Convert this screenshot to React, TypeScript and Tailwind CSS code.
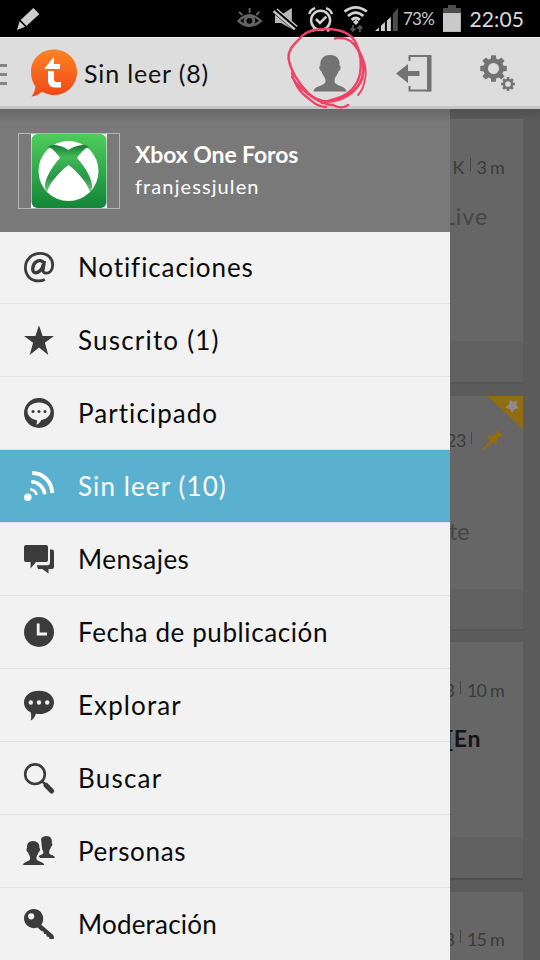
import type { ReactNode } from "react";

const GEAR_TEETH = [0, 45, 90, 135, 180, 225, 270, 315];

const MENU = [
  { label: "Notificaciones", icon: "at", tracking: "tracking-[0.9px]" },
  { label: "Suscrito (1)", icon: "star", tracking: "tracking-[1.2px]" },
  { label: "Participado", icon: "participated", tracking: "tracking-[1.05px]" },
  { label: "Sin leer (10)", icon: "feed", tracking: "tracking-[1.1px]" },
  { label: "Mensajes", icon: "messages", tracking: "tracking-[0.5px]" },
  { label: "Fecha de publicación", icon: "clock", tracking: "tracking-[0.6px]" },
  { label: "Explorar", icon: "explore", tracking: "tracking-[1.1px]" },
  { label: "Buscar", icon: "search", tracking: "tracking-[1.2px]" },
  { label: "Personas", icon: "people", tracking: "tracking-[0.7px]" },
  { label: "Moderación", icon: "key", tracking: "tracking-[0.2px]" },
];

const ICONS: Record<string, ReactNode> = {
  at: (
    <g fill="none" stroke="currentColor" transform="translate(-.6 -.6)">
      <path d="M21.5 28C19.5 29 17.5 29.5 15.2 29.5C7 29.5 2 24 2 16.2C2 8 8.4 2 16.8 2C24.5 2 29.3 7 29.3 13.6C29.3 18.8 26.2 21.8 22.8 21.8C20.2 21.8 19.4 20.3 19.9 17.8L21.3 9.5" strokeWidth="2.8" />
      <path d="M20.3 11.5C18.8 8.8 15.6 8.6 13 10.3C9 12.8 7.8 20.8 11.8 21.3C15.4 21.7 19.3 18 20.1 12.7" strokeWidth="3.4" />
    </g>
  ),
  star: <path d="M15 .3L18.6 11H30L20.9 17.8L24.3 30L15 22.6L5.7 30L9.1 17.8L0 11H11.4Z" />,
  participated: (
    <>
      <circle cx="15" cy="15" r="15" />
      <path d="M15 4.4C21.6 4.4 26.5 8.3 26.5 13.2C26.5 17.7 22.5 21.2 17.3 21.9C16.4 24 14.8 25.8 12.3 26.8C13 25 13.1 23.6 12.8 22C7.3 21.3 3.5 17.7 3.5 13.2C3.5 8.3 8.4 4.4 15 4.4Z" fill="#f2f2f2" />
      <circle cx="9" cy="13.5" r="1.5" />
      <circle cx="15" cy="13.5" r="1.5" />
      <circle cx="21" cy="13.5" r="1.5" />
    </>
  ),
  feed: (
    <>
      <circle cx="3.8" cy="26.3" r="3.8" />
      <g fill="none" stroke="currentColor">
        <path d="M6 18.2C9.6 18.5 12 20.8 12.6 24" strokeWidth="2.6" />
        <path d="M7.3 10.8C14.2 11 20 16 20.8 23.2" strokeWidth="3.6" />
        <path d="M8.2 2C19.2 2 27.8 11 28.3 22.2" strokeWidth="4" />
      </g>
    </>
  ),
  messages: (
    <>
      <path d="M2 1H22Q24 1 24 3V16Q24 18 22 18H12L6.6 24.5V18H2Q0 18 0 16V3Q0 1 2 1Z" />
      <path d="M26 5.6H28Q30 5.6 30 7.8V23Q30 25 28 25H24.5V29.5L18.2 25H14L12.8 21.2H24Q26 21 26 18.5Z" />
    </>
  ),
  clock: (
    <>
      <circle cx="15" cy="15" r="15" />
      <path d="M14.2 6.5V17H23" fill="none" stroke="#f2f2f2" strokeWidth="2.8" />
    </>
  ),
  explore: (
    <>
      <path d="M15 .8C23.4 .8 30 5.5 30 12.4C30 19.4 23.2 24 15 24C13.8 24 12.8 23.9 11.8 23.7C11.2 26.4 9.8 28.8 6.7 30.5C7.5 27.2 7.3 24.5 6.6 22.2C2.4 20.1 0 16.6 0 12.4C0 5.5 6.6 .8 15 .8Z" />
      <g fill="#f2f2f2">
        <circle cx="6.8" cy="12.5" r="2.2" />
        <circle cx="15" cy="12.5" r="2.2" />
        <circle cx="23.2" cy="12.5" r="2.2" />
      </g>
    </>
  ),
  search: (
    <>
      <circle cx="11" cy="11.2" r="9.8" fill="none" stroke="currentColor" strokeWidth="2.6" />
      <path d="M17.8 18L22 22.2" stroke="currentColor" strokeWidth="2.4" />
      <path d="M22 22.2L27.7 28" stroke="currentColor" strokeWidth="5" strokeLinecap="round" />
    </>
  ),
  people: (
    <>
      <path d="M17 3C18 .8 20.2 0 22.5 0C26.6 0 28.5 3 27.8 7.2C28.9 7.4 28.3 10.3 27.1 10.6C26.8 12.8 25 13.6 25.1 16.4C25.3 19.4 30.8 18.5 31 22H16.2L14.5 20.2C16.2 19 19.3 18.6 19.4 16.8C19.4 15 18.2 13.8 18 12.2Z" />
      <path d="M9 5C13.3 5 16 8 15.3 12C16.8 12.4 16 15.8 14.5 16.2C14.2 18.4 12.2 20.1 12.4 22.5C12.6 26 19.7 25.3 20.4 29H-1C-.6 25.3 6 26 6.2 22.5C6.3 20.1 4.5 18.4 4 16.2C2.4 15.8 1.8 12.4 3.2 12C2.3 8 4.7 5 9 5Z" />
    </>
  ),
  key: (
    <path
      fillRule="evenodd"
      d="M9.5 0C15.5 0 19.7 4.7 19.2 10.5C19.1 12.6 18.3 14.2 17.3 15.7L29 25.8Q30 27 30 30H25.5L25.1 27.9L22.8 27.4L22.3 25.2L20 24.7L19.4 22.6L17.4 22L13.5 18.5C6.8 21 0 15.8 0 9.5C0 4.3 4.3 0 9.5 0ZM7.2 4.2A3.1 3.1 0 1 0 7.2 10.4A3.1 3.1 0 1 0 7.2 4.2Z"
    />
  ),
};

function StatusBar() {
  return (
    <div className="flex h-[37px] shrink-0 items-center bg-black pr-[16px] pl-[16px] text-[#c9c9c9]">
      <svg width="24" height="24" viewBox="0 0 24 24" fill="#cfcfcf">
        <path d="M17.5 1L23.5 7L10.5 19L4.7 13ZM3.6 14.2L9.2 19.8L1 23Z" />
      </svg>
      <svg className="ml-[197px]" width="26" height="22" viewBox="0 0 26 22" fill="none" stroke="#646464">
        <path d="M1.5 13Q12.5 1.5 24 13Q12.5 22.5 1.5 13Z" strokeWidth="2.4" />
        <circle cx="12.5" cy="12.8" r="4.4" strokeWidth="3" />
        <path d="M2 4L5.5 7M12.7 0V5M22.5 3.5L19.5 7" strokeWidth="2" />
      </svg>
      <svg className="ml-[10px]" width="26" height="24" viewBox="0 0 26 24" fill="#b8b8b8">
        <path d="M2 8H8L19 1V22L8 16H2Z" />
        <path d="M1 3L25 23" stroke="#000" strokeWidth="6" />
        <path d="M.5 4L22 22.5" stroke="#c9c9c9" strokeWidth="2.4" />
        <path d="M4 2L24.5 19.5" stroke="#c9c9c9" strokeWidth="1.4" />
      </svg>
      <svg className="ml-[10px]" width="26" height="26" viewBox="0 0 26 26" fill="none" stroke="#d2d2d2" strokeWidth="2.5">
        <circle cx="12.7" cy="14.3" r="9.6" />
        <path d="M8 13L12 17L18.5 10.5M1.3 8Q2.5 3.2 7.2 2M24.2 8Q22.7 3.2 18.2 2M4.5 25.5L7 22M21 25.5L18.5 22" />
      </svg>
      <svg className="ml-[9px]" width="26" height="28" viewBox="0 0 26 28" fill="none" stroke="#d2d2d2" strokeWidth="2.7">
        <path d="M1.5 6.5Q12.8-2 24 6.5M5 11Q12.8 4 20.5 11M8.7 15Q12.8 11 17 15" />
        <path d="M13 14.5L16 17L13 20L10 17Z" fill="#d2d2d2" stroke="none" />
        <path d="M10 20V26M7.5 23.5L10 26L12.5 23.5M17 27V21M14.5 23.5L17 21L19.5 23.5" stroke="#555" strokeWidth="1.8" />
      </svg>
      <svg className="ml-[5px]" width="25" height="25" viewBox="0 0 25 25" fill="#cfcfcf">
        <path d="M1 25L5 21.5V25ZM7 19.7L11 16V25H7ZM13 14.5L17 11V25H13Z" />
        <path d="M19 8L24 2V25H19Z" fill="#4d4d4d" />
      </svg>
      <span className="ml-[4px] w-[33px] text-[17px] leading-none tracking-[-0.7px] whitespace-nowrap">73%</span>
      <svg className="ml-[7px]" width="18" height="27" viewBox="0 0 18 27">
        <path d="M5 0H13V3H18V9H0V3H5Z" fill="#4d4d4d" />
        <path d="M0 8H18V27H0Z" fill="#c9c9c9" />
      </svg>
      <span className="ml-[9px] text-[21px] leading-none tracking-[0.1px] text-[#d9d9d9]">22:05</span>
    </div>
  );
}

function Gear({ size }: { size: number }) {
  return (
    <svg width={size} height={size} viewBox="-13 -13 26 26" fill="#737373">
      <circle r="7.6" fill="none" stroke="#737373" strokeWidth="4.6" />
      {GEAR_TEETH.map((angle) => (
        <path key={angle} d="M-2.8-8L-2.3-12.8H2.3L2.8-8Z" transform={`rotate(${angle})`} />
      ))}
    </svg>
  );
}

function ActionBar() {
  return (
    <div className="relative flex h-[72px] shrink-0 items-center border-t border-b-[3px] border-t-[#eeeeee] border-b-[#c6c6c6] bg-[#dddddd]">
      <div className="flex w-[7px] flex-col gap-[6px] pt-[4px]">
        <div className="h-[3px] bg-[#858585]" />
        <div className="h-[3px] bg-[#858585]" />
        <div className="h-[3px] bg-[#858585]" />
      </div>
      <svg className="mt-[2px] ml-[23px]" width="48" height="50" viewBox="0 0 48 50">
        <defs>
          <linearGradient id="logo" x1="0" y1="0" x2="0" y2="1">
            <stop offset="0" stopColor="#fb8424" />
            <stop offset="1" stopColor="#f04716" />
          </linearGradient>
        </defs>
        <path d="M24 1.5C37 1.5 47 11 47 24C47 37 37 47 24 47C20.5 47 17 46.2 12 43.7C9 46.2 6 48 1.5 48.5C4 45.5 5 42 5.5 38.5C2.6 34.6 1 29.6 1 24C1 11 11 1.5 24 1.5Z" fill="url(#logo)" />
        <path d="M14.5 20.5L24 8.5V16H30V21H14.5ZM18 23H24V31C24 33.5 25.3 34 27 34H31V39.5H25.5C20.5 39.5 18 37 18 32Z" fill="#fff" />
      </svg>
      <h1 className="ml-[6px] w-[130px] pt-[2px] text-[25px] leading-none tracking-[0.85px] whitespace-nowrap text-[#111111]">Sin leer (8)</h1>
      <svg className="mt-[2px] ml-[99px]" width="34" height="37" viewBox="0 0 34 37" fill="#737373">
        <path d="M17 0C24 0 27.5 5 26.4 10.5C28.6 11 27.6 15.8 25.5 16.3C24.7 20 21.5 22 21.5 26C21.5 31.5 32.5 30 33.5 36.5H.5C1.5 30 12.5 31.5 12.5 26C12.5 22 9.3 20 8.5 16.3C6.4 15.8 5.4 11 7.6 10.5C6.5 5 10 0 17 0Z" />
      </svg>
      <svg className="mt-[2px] ml-[48px]" width="38" height="37" viewBox="0 0 38 37">
        <path d="M14.5 6V1H34V35.5H14.5V31" fill="none" stroke="#737373" strokeWidth="2" />
        <path d="M32 0H36.5V36.5H32ZM1 18.5L13 9V16H24.5V21H13V28Z" fill="#737373" />
      </svg>
      <div className="flex items-end pt-[2px] pl-[47px]">
        <div className="mb-[9px]">
          <Gear size={27} />
        </div>
        <div className="-ml-[6px]">
          <Gear size={14} />
        </div>
      </div>
      {/* hand-drawn ring around the profile button */}
      <svg className="pointer-events-none absolute -top-[13px] left-[284px]" width="86" height="86" viewBox="284 25 86 86" fill="none" stroke="#ee4365" strokeWidth="2.4" strokeLinecap="round" strokeLinejoin="round">
        <path d="M335 38.5C346 36 353 41 358 50C363 59 365 69 362 79C357 91 346 99 333 101C325 102.5 317 101 309 94C299 84 290 70 288.5 58C288 48 296 43 302 36C307 31 315 29 326 29C340 29 351 33 356 43C360 52 362 63 360 74C357 86 350 94 338 98C329 101 324 102 322 103" />
        <path d="M292 73C294 82 297 88 303 94C310 99 316 107 326 107M292 77C298 87 306 93 314 98C320 102 326 105 333 105C338 108 344 108 348 105" />
        <path d="M355 43C361 53 368 66 365 79C364 86 362 91 358 95M362 59C366 68 362 79 358 86" strokeWidth="1.8" />
      </svg>
    </div>
  );
}

function ForumHeader() {
  return (
    <div className="flex h-[123px] shrink-0 items-center bg-[linear-gradient(to_bottom,#686868_0,#797979_14px)] pl-[18px] text-white">
      <div className="flex h-[76px] w-[102px] justify-center border border-[#b5b5b5]">
        <svg width="76" height="74" viewBox="0 0 76 74">
          <defs>
            <linearGradient id="tile" x1="0" y1="0" x2="0" y2="1">
              <stop offset="0" stopColor="#50cc5c" />
              <stop offset="1" stopColor="#118638" />
            </linearGradient>
            <linearGradient id="cross" x1="0" y1="0" x2="0" y2="1">
              <stop offset="0" stopColor="#197b33" />
              <stop offset=".25" stopColor="#42b957" />
              <stop offset=".7" stopColor="#279646" />
              <stop offset="1" stopColor="#7bc486" />
            </linearGradient>
          </defs>
          <rect width="76" height="74" fill="#fff" />
          <rect x=".5" width="75" height="74" rx="6" fill="url(#tile)" />
          <circle cx="37.5" cy="37" r="30" fill="#fff" />
          <path d="M17 13C23 9 31 12 37.5 16C44 12 52 9 58 13C54 14 50 18 46 24C55 34 62 46 61 54L59 58C56 49 48 39 37.5 31C27 39 19 49 16 58L14 54C13 46 20 34 29 24C25 18 21 14 17 13Z" fill="url(#cross)" />
        </svg>
      </div>
      <div className="pb-[4px] pl-[15px] whitespace-nowrap">
        <p className="text-[23px] leading-[34px] font-bold tracking-[-0.1px]">Xbox One Foros</p>
        <p className="text-[20px] leading-[30px] tracking-[1.1px]">franjessjulen</p>
      </div>
    </div>
  );
}

function Drawer() {
  return (
    <div className="flex w-[450px] shrink-0 flex-col bg-[#f2f2f2]">
      <ForumHeader />
      <nav className="-mt-px flex flex-col">
        {MENU.map((item, i) => (
          <div
            key={item.icon}
            className={`flex h-[73px] shrink-0 items-center border-b border-[#e2e2e2] pl-[24px] ${
              item.icon === "feed" ? "bg-[#59b0cf] text-white" : i === 0 ? "text-[#3b3b3b]" : "bg-[#f2f2f2] text-[#3b3b3b]"
            }`}
          >
            <svg className="overflow-visible" width="30" height="30" viewBox="0 0 30 30" fill="currentColor">
              {ICONS[item.icon]}
            </svg>
            <span className={`pl-[24px] text-[26px] leading-none whitespace-nowrap ${item.tracking} ${item.icon === "feed" ? "text-white" : "text-[#0a0a0a]"}`}>
              {item.label}
            </span>
          </div>
        ))}
      </nav>
    </div>
  );
}

function Meta({ views, time }: { views: string; time: string }) {
  return (
    <div className="flex items-center justify-end gap-[5px] pr-[19px] text-[18px] leading-none whitespace-nowrap text-[#3b3b3b]">
      <span>{views}</span>
      <span className="-mt-[5px] h-[13px] w-px shrink-0 bg-[#464646]" />
      <span className="pl-[1px] tracking-[-0.8px]">{time}</span>
    </div>
  );
}

function TopicList() {
  return (
    <div className="flex w-[90px] flex-col overflow-hidden bg-[linear-gradient(to_bottom,#505050_0,#5b5b5b_12px)] pt-[10px] pr-[17px]">
      <div className="mb-[12px] flex h-[265px] shrink-0 flex-col border-b-2 border-[#565656] bg-[#666666] pt-[39px]">
        <Meta views="K" time="3 m" />
        <p className="-ml-[7px] pt-[29px] text-[23px] leading-none tracking-[1px] text-[#454545]">Live</p>
        <div className="mt-auto h-[41px] bg-[#616161]" />
      </div>
      <div className="relative mb-[11px] flex h-[235px] shrink-0 flex-col border-b-2 border-[#565656] bg-[#666666] pt-[35px]">
        <svg className="absolute top-0 right-0" width="36" height="33" viewBox="0 0 36 33">
          <path d="M0 0H36V33Z" fill="#916c10" />
          <path d="M23 3.5L26.2 6L30.5 4.5L29.3 8.8L32 12.5L27.8 13L25 17L22.8 13L18 11.5L21.8 8.5Z" fill="#8c8c8c" />
        </svg>
        <div className="flex items-center text-[18px] leading-none text-[#3b3b3b]">
          <span className="-ml-[4px] tracking-[-0.5px]">23</span>
          <span className="-mt-[4px] ml-[5px] h-[12px] w-px shrink-0 bg-[#464646]" />
          <svg className="-my-[4px] ml-[11px] shrink-0" width="20" height="20" viewBox="0 0 20 20" fill="#956e0c">
            <path d="M13.5 0L20 6L17 6.5L13.7 10V15L9.8 11.8L1 20L0 19L7.7 9.7L3.5 6L10 5.7L13.5 2.5Z" />
          </svg>
        </div>
        <p className="-ml-[1px] pt-[71px] text-[23px] leading-none text-[#454545]">te</p>
        <div className="mt-auto h-[40px] bg-[#616161]" />
      </div>
      <div className="mb-[12px] flex h-[238px] shrink-0 flex-col border-b-2 border-[#505050] bg-[#666666] pt-[39px]">
        <Meta views="3" time="10 m" />
        <p className="-ml-[4px] pt-[28px] text-[23px] leading-none font-bold tracking-[0.6px] text-[#151515]">[En</p>
        <div className="mt-auto h-[41px] bg-[#616161]" />
      </div>
      <div className="h-[68px] shrink-0 bg-[#666666] pt-[38px]">
        <Meta views="8" time="15 m" />
      </div>
    </div>
  );
}

export default function App() {
  return (
    <div className="flex h-[960px] w-[540px] flex-col overflow-hidden bg-black font-['Lato','Open_Sans',sans-serif]">
      <StatusBar />
      <ActionBar />
      <div className="flex min-h-0 flex-1 overflow-hidden">
        <Drawer />
        <TopicList />
      </div>
    </div>
  );
}
